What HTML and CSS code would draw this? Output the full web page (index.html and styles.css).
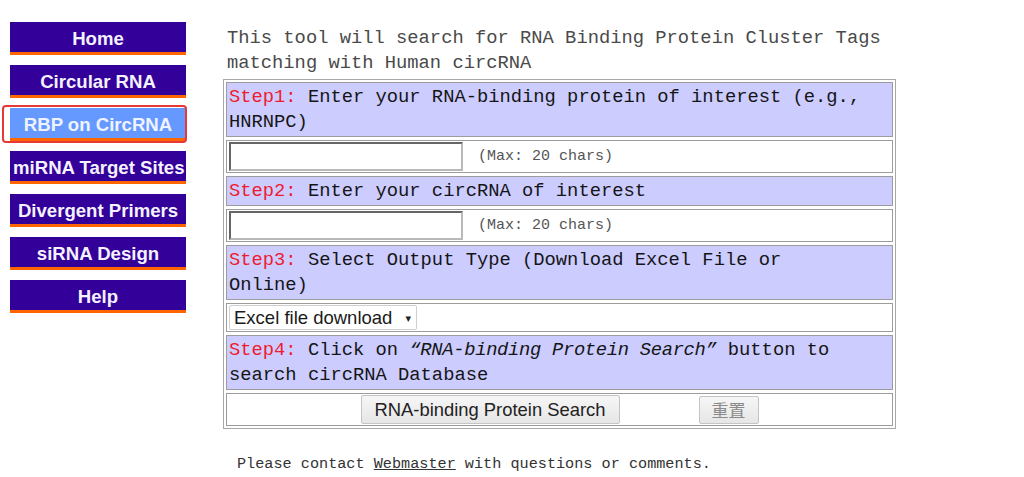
FILE: index.html
```html
<!DOCTYPE html>
<html>
<head>
<meta charset="utf-8">
<title>RBP on CircRNA</title>
<link rel="stylesheet" href="styles.css">
</head>
<body>
<div class="page">
  <nav class="nav">
    <a class="nav-item" href="#">Home</a>
    <a class="nav-item" href="#">Circular RNA</a>
    <a class="nav-item active" href="#">RBP on CircRNA</a>
    <a class="nav-item" href="#">miRNA Target Sites</a>
    <a class="nav-item" href="#">Divergent Primers</a>
    <a class="nav-item" href="#">siRNA Design</a>
    <a class="nav-item" href="#">Help</a>
  </nav>
  <main class="main">
    <p class="intro">This tool will search for RNA Binding Protein Cluster Tags matching with Human circRNA</p>
    <form class="steps">
      <div class="cell head"><span class="step">Step1:</span> Enter your RNA-binding protein of interest (e.g., HNRNPC)</div>
      <div class="cell field"><input class="text-in" type="text"><span class="max">(Max: 20 chars)</span></div>
      <div class="cell head"><span class="step">Step2:</span> Enter your circRNA of interest</div>
      <div class="cell field"><input class="text-in" type="text"><span class="max">(Max: 20 chars)</span></div>
      <div class="cell head"><span class="step">Step3:</span> Select Output Type (Download Excel File or<br>Online)</div>
      <div class="cell field sel-row"><label class="sel-wrap"><select class="sel"><option>Excel file download</option><option>Online</option></select></label></div>
      <div class="cell head"><span class="step">Step4:</span> Click on <i class="quote">“RNA-binding Protein Search”</i> button to search circRNA Database</div>
      <div class="cell btn-row"><button class="btn search" type="button">RNA-binding Protein Search</button><button class="btn reset" type="reset">重置</button></div>
    </form>
    <p class="footer">Please contact <a href="#" class="wm">Webmaster</a> with questions or comments.</p>
  </main>
</div>
</body>
</html>
```

FILE: styles.css
```css
html, body {
  margin: 0;
  padding: 0;
  background: #ffffff;
}

.page {
  display: flex;
  align-items: flex-start;
}

.nav {
  display: flex;
  flex-direction: column;
  gap: 10px;
  padding: 22px 0 0 10px;
  width: 176px;
  flex: none;
}

.nav-item {
  position: relative;
  display: block;
  height: 30px;
  line-height: 34px;
  border-bottom: 3px solid #ff6600;
  background: #330099;
  color: #f4f2ff;
  font-family: "Liberation Sans", Arial, sans-serif;
  font-weight: bold;
  font-size: 18.6px;
  text-align: center;
  text-decoration: none;
  white-space: nowrap;
  overflow: hidden;
  padding: 0 3px;
}

.nav-item.active {
  background: #6699ff;
  color: #eef3ff;
  overflow: visible;
}

.nav-item.active::before {
  content: "";
  position: absolute;
  left: -8px;
  top: -3px;
  right: -1px;
  bottom: -5px;
  border: 2px solid #e53935;
  border-radius: 4px;
}

.main {
  margin-left: 37px;
  padding-top: 26px;
  flex: none;
}

.intro {
  margin: 0 0 3px 0;
  padding-left: 4px;
  width: 670px;
  font-family: "Liberation Mono", "DejaVu Sans Mono", monospace;
  font-size: 18.8px;
  line-height: 25px;
  color: #4a4a4a;
}

.steps {
  display: flex;
  flex-direction: column;
  gap: 3px;
  width: 667px;
  padding: 2px;
  border: 1px solid #a8a8a8;
  margin: 0;
}

.cell {
  border: 1px solid #9c9c9c;
  font-family: "Liberation Mono", "DejaVu Sans Mono", monospace;
  font-size: 18.8px;
  color: #151515;
}

.head {
  background: #ccccff;
  padding: 2px 2px 1px 2px;
  line-height: 25px;
}

.step {
  color: #ee1c2e;
}

.quote {
  font-style: italic;
  letter-spacing: -0.3px;
}

.field {
  display: flex;
  align-items: center;
  padding: 1px 2px;
  background: #ffffff;
}

.text-in {
  box-sizing: border-box;
  width: 234px;
  height: 29px;
  border: 2px inset #b9b9b9;
  margin: 0;
  padding: 0 3px;
  background: #fff;
}

.max {
  margin-left: 15px;
  font-size: 15px;
  color: #555555;
}

.sel-wrap {
  position: relative;
  display: block;
  width: 188px;
  height: 25px;
}

.sel-wrap::after {
  content: "▾";
  position: absolute;
  right: 6px;
  top: 1px;
  font-family: "DejaVu Sans", sans-serif;
  font-size: 11px;
  line-height: 25px;
  color: #222;
  pointer-events: none;
}

.sel {
  appearance: none;
  -webkit-appearance: none;
  box-sizing: border-box;
  width: 188px;
  height: 25px;
  margin: 0;
  padding: 0 0 0 4px;
  border: 1px solid #cfcfcf;
  border-radius: 2px;
  background: #ffffff;
  font-family: "Liberation Sans", Arial, sans-serif;
  font-size: 18.5px;
  color: #1a1a1a;
}

.btn-row {
  display: flex;
  justify-content: center;
  align-items: center;
  gap: 79px;
  padding: 1px 2px;
  height: 29px;
}

.btn {
  box-sizing: border-box;
  margin: 0;
  border: 1px solid #c4c4c4;
  border-radius: 2px;
  background: linear-gradient(#f6f6f6, #e6e6e6);
  font-family: "Liberation Sans", Arial, sans-serif;
  color: #222;
  padding: 0;
}

.search {
  width: 259px;
  height: 29px;
  font-size: 18.4px;
}

.reset {
  width: 60px;
  height: 28px;
  font-family: "Noto Sans CJK SC", sans-serif;
  font-size: 17px;
  color: #8a8a8a;
}

.footer {
  margin: 26px 0 0 0;
  padding-left: 14px;
  font-family: "Liberation Mono", "DejaVu Sans Mono", monospace;
  font-size: 15.2px;
  line-height: 18px;
  color: #333333;
}

.wm {
  color: #333333;
  text-decoration: underline;
}
```
